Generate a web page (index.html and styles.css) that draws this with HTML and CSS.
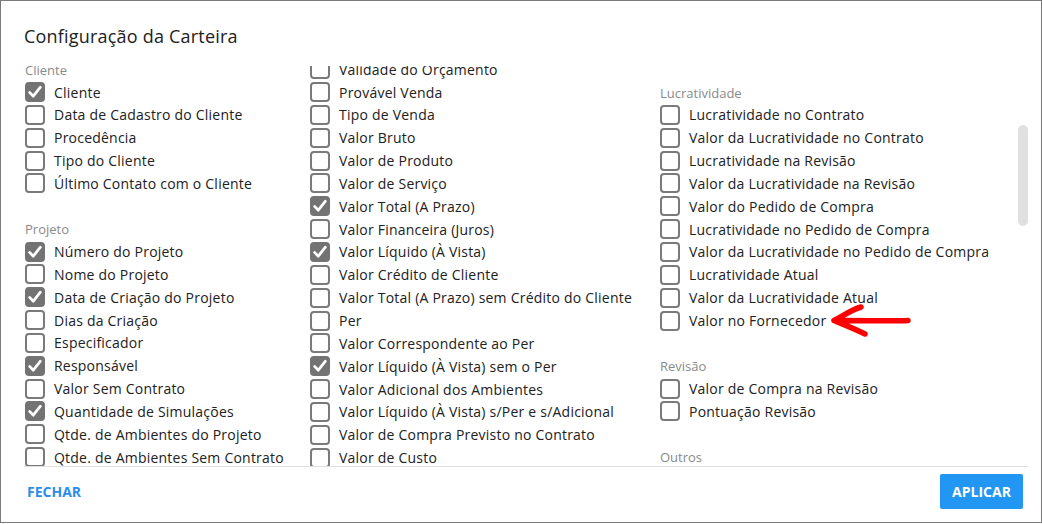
FILE: index.html
```html
<!DOCTYPE html>
<html lang="pt-BR">
<head>
<meta charset="utf-8">
<title>Configuração da Carteira</title>
<link rel="stylesheet" href="styles.css">
</head>
<body>
<div class="dialog">
  <div class="header"><h1 class="title">Configuração da Carteira</h1></div>
  <div class="viewport">
    <div class="grid">
      <div class="col">
        <div class="section">
          <div class="label">Cliente</div>
          <div class="item"><span class="box checked"><svg viewBox="0 0 20 20"><path d="M4.6 10.4 L8.3 14.2 L15.4 5.2"/></svg></span><span class="text">Cliente</span></div>
          <div class="item"><span class="box"></span><span class="text">Data de Cadastro do Cliente</span></div>
          <div class="item"><span class="box"></span><span class="text">Procedência</span></div>
          <div class="item"><span class="box"></span><span class="text">Tipo do Cliente</span></div>
          <div class="item"><span class="box"></span><span class="text">Último Contato com o Cliente</span></div>
        </div>
        <div class="section">
          <div class="label">Projeto</div>
          <div class="item"><span class="box checked"><svg viewBox="0 0 20 20"><path d="M4.6 10.4 L8.3 14.2 L15.4 5.2"/></svg></span><span class="text">Número do Projeto</span></div>
          <div class="item"><span class="box"></span><span class="text">Nome do Projeto</span></div>
          <div class="item"><span class="box checked"><svg viewBox="0 0 20 20"><path d="M4.6 10.4 L8.3 14.2 L15.4 5.2"/></svg></span><span class="text">Data de Criação do Projeto</span></div>
          <div class="item"><span class="box"></span><span class="text">Dias da Criação</span></div>
          <div class="item"><span class="box"></span><span class="text">Especificador</span></div>
          <div class="item"><span class="box checked"><svg viewBox="0 0 20 20"><path d="M4.6 10.4 L8.3 14.2 L15.4 5.2"/></svg></span><span class="text">Responsável</span></div>
          <div class="item"><span class="box"></span><span class="text">Valor Sem Contrato</span></div>
          <div class="item"><span class="box checked"><svg viewBox="0 0 20 20"><path d="M4.6 10.4 L8.3 14.2 L15.4 5.2"/></svg></span><span class="text">Quantidade de Simulações</span></div>
          <div class="item"><span class="box"></span><span class="text">Qtde. de Ambientes do Projeto</span></div>
          <div class="item"><span class="box"></span><span class="text">Qtde. de Ambientes Sem Contrato</span></div>
        </div>
      </div>
      <div class="col">
        <div class="section">
          <div class="item"><span class="box"></span><span class="text">Validade do Orçamento</span></div>
          <div class="item"><span class="box"></span><span class="text">Provável Venda</span></div>
          <div class="item"><span class="box"></span><span class="text">Tipo de Venda</span></div>
          <div class="item"><span class="box"></span><span class="text">Valor Bruto</span></div>
          <div class="item"><span class="box"></span><span class="text">Valor de Produto</span></div>
          <div class="item"><span class="box"></span><span class="text">Valor de Serviço</span></div>
          <div class="item"><span class="box checked"><svg viewBox="0 0 20 20"><path d="M4.6 10.4 L8.3 14.2 L15.4 5.2"/></svg></span><span class="text">Valor Total (A Prazo)</span></div>
          <div class="item"><span class="box"></span><span class="text">Valor Financeira (Juros)</span></div>
          <div class="item"><span class="box checked"><svg viewBox="0 0 20 20"><path d="M4.6 10.4 L8.3 14.2 L15.4 5.2"/></svg></span><span class="text">Valor Líquido (À Vista)</span></div>
          <div class="item"><span class="box"></span><span class="text">Valor Crédito de Cliente</span></div>
          <div class="item"><span class="box"></span><span class="text">Valor Total (A Prazo) sem Crédito do Cliente</span></div>
          <div class="item"><span class="box"></span><span class="text">Per</span></div>
          <div class="item"><span class="box"></span><span class="text">Valor Correspondente ao Per</span></div>
          <div class="item"><span class="box checked"><svg viewBox="0 0 20 20"><path d="M4.6 10.4 L8.3 14.2 L15.4 5.2"/></svg></span><span class="text">Valor Líquido (À Vista) sem o Per</span></div>
          <div class="item"><span class="box"></span><span class="text">Valor Adicional dos Ambientes</span></div>
          <div class="item"><span class="box"></span><span class="text">Valor Líquido (À Vista) s/Per e s/Adicional</span></div>
          <div class="item"><span class="box"></span><span class="text">Valor de Compra Previsto no Contrato</span></div>
          <div class="item"><span class="box"></span><span class="text">Valor de Custo</span></div>
        </div>
      </div>
      <div class="col col-offset">
        <div class="section">
          <div class="label">Lucratividade</div>
          <div class="item"><span class="box"></span><span class="text">Lucratividade no Contrato</span></div>
          <div class="item"><span class="box"></span><span class="text">Valor da Lucratividade no Contrato</span></div>
          <div class="item"><span class="box"></span><span class="text">Lucratividade na Revisão</span></div>
          <div class="item"><span class="box"></span><span class="text">Valor da Lucratividade na Revisão</span></div>
          <div class="item"><span class="box"></span><span class="text">Valor do Pedido de Compra</span></div>
          <div class="item"><span class="box"></span><span class="text">Lucratividade no Pedido de Compra</span></div>
          <div class="item"><span class="box"></span><span class="text">Valor da Lucratividade no Pedido de Compra</span></div>
          <div class="item"><span class="box"></span><span class="text">Lucratividade Atual</span></div>
          <div class="item"><span class="box"></span><span class="text">Valor da Lucratividade Atual</span></div>
          <div class="item"><span class="box"></span><span class="text">Valor no Fornecedor</span></div>
        </div>
        <div class="section">
          <div class="label">Revisão</div>
          <div class="item"><span class="box"></span><span class="text">Valor de Compra na Revisão</span></div>
          <div class="item"><span class="box"></span><span class="text">Pontuação Revisão</span></div>
        </div>
        <div class="section">
          <div class="label">Outros</div>
        </div>
      </div>
    </div>
    <div class="thumb"></div>
  </div>
  <div class="footer">
    <button class="btn-text">FECHAR</button>
    <button class="btn-primary">APLICAR</button>
  </div>
  <svg class="arrow" width="100" height="50" viewBox="0 0 100 50">
    <path d="M79 16.5 C60 17.5 30 16 5 16.5 M5 16.5 C14 12 22 6 32 3 M5 16.5 C16 21 26 25 36 30"/>
  </svg>
</div>
</body>
</html>
```

FILE: styles.css
```css
* { box-sizing: border-box; }
html, body { margin: 0; padding: 0; background: #fff; }
body {
  font-family: "Open Sans", "Noto Sans", sans-serif;
  color: #212121;
}
.dialog {
  position: relative;
  width: 1042px;
  height: 523px;
  border: 1px solid #7a7a7a;
  display: flex;
  flex-direction: column;
  background: #fff;
}
.header {
  height: 65px;
  padding: 23px 13px 0 23px;
}
.title {
  margin: 0;
  font-size: 18px;
  line-height: 24px;
  font-weight: 500;
  letter-spacing: 0.2px;
  color: #212121;
}
.viewport {
  position: relative;
  height: 401px;
  margin: 0 13px 0 23px;
  overflow: hidden;
  border-bottom: 1px solid #e0e0e0;
}
.grid {
  display: grid;
  grid-template-columns: 285px 350px 1fr;
  margin-top: -8.2px;
}
.col-offset { padding-top: 22.85px; }
.section + .section { margin-top: 22.4px; }
.label {
  height: 22.85px;
  display: flex;
  align-items: center;
  font-size: 13px;
  color: #8a8a8a;
  padding-left: 1px;
  padding-top: 1px;
}
.item {
  height: 22.85px;
  display: flex;
  align-items: center;
  gap: 9px;
  padding-left: 1px;
  font-size: 14px;
  letter-spacing: 0.22px;
  white-space: nowrap;
}
.box {
  flex: none;
  width: 20px;
  height: 20px;
  border: 2px solid #7a7a7a;
  border-radius: 4px;
  background: #fff;
  position: relative;
}
.box.checked {
  background: #737373;
  border-color: #737373;
}
.box svg {
  position: absolute;
  left: -2px;
  top: -2px;
  width: 20px;
  height: 20px;
  fill: none;
  stroke: #fff;
  stroke-width: 2.7;
  stroke-linecap: round;
  stroke-linejoin: round;
}
.text { line-height: 20px; padding-top: 1px; }
.thumb {
  position: absolute;
  right: 0;
  top: 59px;
  width: 10px;
  height: 101px;
  border-radius: 5px;
  background: #e0e0e0;
}
.footer {
  height: 49px;
  margin-bottom: 6px;
  display: flex;
  align-items: center;
  justify-content: space-between;
  padding: 0 18px 0 23px;
}
.btn-text {
  border: 0;
  background: none;
  padding: 0 3px;
  font-family: "Open Sans", sans-serif;
  font-weight: 700;
  font-size: 14px;
  color: #2b8ee6;
}
.btn-primary {
  border: 0;
  border-radius: 2px;
  background: #2196f3;
  color: #fff;
  font-family: "Open Sans", sans-serif;
  font-weight: 700;
  font-size: 14px;
  width: 83px;
  height: 35px;
  padding: 0;
}
.arrow {
  position: absolute;
  left: 828px;
  top: 303px;
  fill: none;
  stroke: #ff0000;
  stroke-width: 5.5;
  stroke-linecap: round;
  stroke-linejoin: round;
}
```
